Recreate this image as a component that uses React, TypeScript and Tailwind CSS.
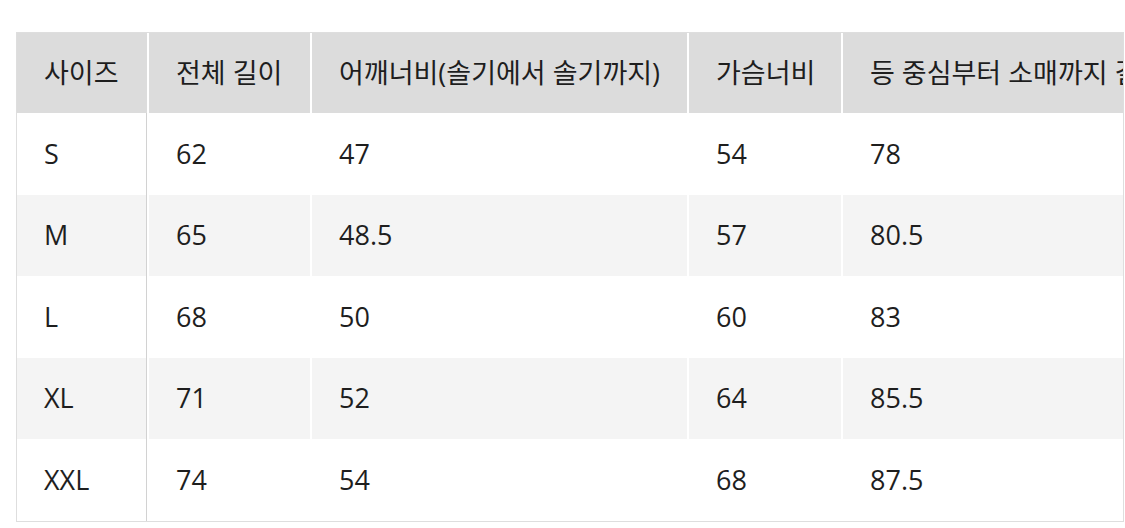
import React from 'react';

const headers = ['사이즈', '전체 길이', '어깨너비(솔기에서 솔기까지)', '가슴너비', '등 중심부터 소매까지 길이'];

const rows = [
  ['S', '62', '47', '54', '78'],
  ['M', '65', '48.5', '57', '80.5'],
  ['L', '68', '50', '60', '83'],
  ['XL', '71', '52', '64', '85.5'],
  ['XXL', '74', '54', '68', '87.5'],
];

const widths = ['w-[132px]', 'w-[163px]', 'w-[377px]', 'w-[154px]', 'w-[440px]'];

export default function App() {
  return (
    <div className="min-h-[528px] w-[1125px] bg-white pl-[16px] pt-[32px] text-[#1e1e1e]" style={{ fontFamily: '"Open Sans", "Noto Sans CJK KR", sans-serif' }}>
      <div className="w-[1108px] overflow-hidden border border-[#dedede]">
        <table className="w-[1266px] table-fixed border-separate border-spacing-0 text-[27px]">
          <colgroup>
            {widths.map((w, i) => (
              <col key={i} className={w} />
            ))}
          </colgroup>
          <thead>
            <tr className="h-[80px]">
              {headers.map((h, i) => (
                <th
                  key={i}
                  className="whitespace-nowrap border-r-2 border-white bg-[#dcdcdc] pl-[27px] text-left font-normal"
                >
                  {h}
                </th>
              ))}
            </tr>
          </thead>
          <tbody>
            {rows.map((r, ri) => (
              <tr key={ri} className="h-[81.6px]">
                {r.map((c, ci) => (
                  <td
                    key={ci}
                    className={`whitespace-nowrap pl-[27px] ${ri % 2 === 1 ? 'bg-[#f4f4f4]' : 'bg-white'} ${
                      ci === 0 ? 'border-r-2 border-white shadow-[inset_-1px_0_0_#d2d2d2]' : 'border-r-2 border-white'
                    }`}
                  >
                    {c}
                  </td>
                ))}
              </tr>
            ))}
          </tbody>
        </table>
      </div>
    </div>
  );
}
